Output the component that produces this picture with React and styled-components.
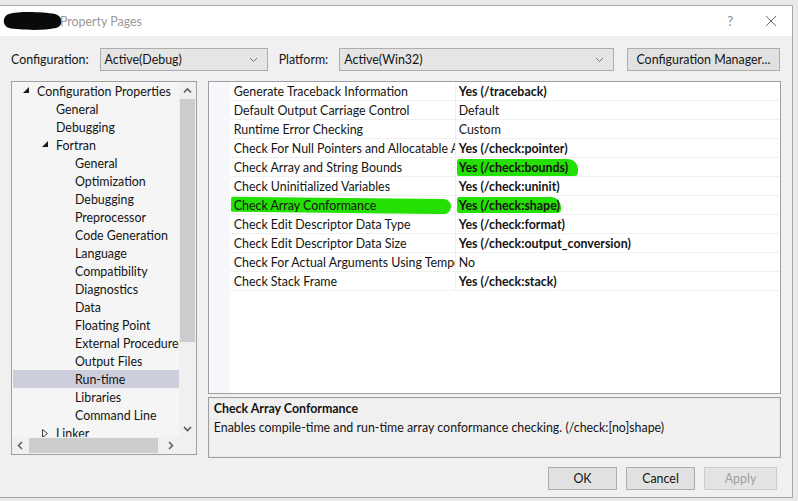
import styled, { createGlobalStyle } from 'styled-components';

const GlobalStyle = createGlobalStyle`
  html, body {
    margin: 0;
    padding: 0;
    background: #e9e9e9;
    overflow: hidden;
  }
  body {
    font-family: Lato, "Noto Sans", sans-serif;
    font-size: 12.4px;
    color: #141414;
  }
`;

const Dialog = styled.div`
  margin-top: 5px;
  width: 792px;
  height: 491px;
  border: 1px solid #a8a8a8;
  border-left: none;
  background: #f0f0f0;
  display: flex;
  flex-direction: column;
`;

const TitleBar = styled.div`
  height: 30px;
  background: #fff;
  display: flex;
  align-items: center;
  padding-left: 3px;
  padding-right: 15px;
  .title {
    color: #9a9a9a;
    margin-left: -3px;
    flex: 1;
    padding-top: 1px;
  }
  .help {
    color: #8a8a8a;
    font-size: 13px;
    margin-right: 32px;
  }
`;

const ConfigRow = styled.div`
  display: flex;
  align-items: center;
  padding: 12px 12px 0 11px;
  height: 23px;
`;

const Label = styled.span`
  width: ${p => p.$w}px;
`;

const Select = styled.div`
  width: ${p => p.$w}px;
  height: 21px;
  border: 1px solid #adadad;
  background: #e5e5e5;
  display: flex;
  align-items: center;
  padding: 0 9px 0 4px;
  margin-right: ${p => p.$mr}px;
  span { flex: 1; }
`;

const Button = styled.div`
  width: ${p => p.$w}px;
  height: 21px;
  border: 1px solid ${p => (p.$disabled ? '#cccccc' : '#adadad')};
  background: ${p => (p.$disabled ? '#e3e3e3' : '#e1e1e1')};
  color: ${p => (p.$disabled ? '#a0a0a0' : '#141414')};
  display: flex;
  align-items: center;
  justify-content: center;
`;

const Main = styled.div`
  display: flex;
  padding: 10px 11px 0 11px;
  gap: 11px;
`;

const TreePanel = styled.div`
  width: 184px;
  height: 372px;
  border: 1px solid #a0a0a0;
  background: #f5f5f5;
  display: grid;
  grid-template-columns: 1fr 17px;
  grid-template-rows: 1fr 17px;
`;

const TreeList = styled.div`
  overflow: hidden;
  padding-left: 1px;
`;

const TreeItem = styled.div`
  height: 18px;
  display: flex;
  align-items: center;
  padding-left: ${p => 24 + p.$level * 19}px;
  white-space: nowrap;
  background: ${p => (p.$selected ? '#cccedb' : 'transparent')};
  position: relative;
  .arrow {
    position: absolute;
    left: ${p => 10 + p.$level * 19}px;
    top: 5px;
  }
`;

const VScroll = styled.div`
  background: #f0f0f0;
  display: flex;
  flex-direction: column;
  align-items: center;
  .thumb {
    width: 15px;
    height: 243px;
    background: #cdcdcd;
  }
  .spacer { flex: 1; }
`;

const ScrollArrow = styled.div`
  width: 17px;
  height: 17px;
  display: flex;
  align-items: center;
  justify-content: center;
`;

const HScroll = styled.div`
  background: #f0f0f0;
  display: flex;
  align-items: center;
  .thumb {
    width: 129px;
    height: 15px;
    background: #cdcdcd;
  }
  .spacer { flex: 1; }
`;

const Corner = styled.div`
  background: #f0f0f0;
`;

const RightCol = styled.div`
  width: 574px;
  display: flex;
  flex-direction: column;
  gap: 3px;
`;

const Grid = styled.div`
  height: 311px;
  border: 1px solid #a0a0a0;
  background: #fff;
  display: flex;
`;

const Margin = styled.div`
  width: 21px;
  background: #f6f8fb;
`;

const Rows = styled.div`
  flex: 1;
  display: flex;
  flex-direction: column;
`;

const Row = styled.div`
  height: 18px;
  border-bottom: 1px solid #f0f0f0;
  display: grid;
  grid-template-columns: 226px 1fr;
`;

const Cell = styled.div`
  position: relative;
  display: flex;
  align-items: center;
  padding-left: ${p => (p.$value ? 3 : 4)}px;
  padding-top: 1px;
  white-space: nowrap;
  overflow: hidden;
  font-weight: ${p => (p.$bold ? 700 : 400)};
  border-right: ${p => (p.$value ? 'none' : '1px solid #f0f0f0')};
  span { position: relative; }
`;

const Marker = styled.div`
  position: absolute;
  left: ${p => p.$l}px;
  width: ${p => p.$w}px;
  top: ${p => p.$t}px;
  height: ${p => p.$h}px;
  background: #24e004;
  border-radius: ${p => p.$r || '2px 10px 4px 2px'};
  transform: rotate(${p => p.$rot || 0}deg);
`;

const Description = styled.div`
  box-sizing: border-box;
  height: 61px;
  border: 1px solid #a0a0a0;
  box-shadow: inset 0 0 0 1px #e8e8e8;
  background: #f0f0f0;
  padding: 3px 5px;
  display: flex;
  flex-direction: column;
  gap: 4px;
  .head { font-weight: 700; }
`;

const Footer = styled.div`
  display: flex;
  justify-content: flex-end;
  gap: 9px;
  padding: 9px 15px 0 0;
`;

const Chevron = ({ dir = 'down', color = '#606060', size = 9, thin }) => {
  const paths = {
    down: 'M1 3 L4.5 6.5 L8 3',
    up: 'M1 6.5 L4.5 3 L8 6.5',
    left: 'M6 1 L2.5 4.5 L6 8',
    right: 'M3 1 L6.5 4.5 L3 8',
  };
  return (
    <svg width={size} height={size} viewBox="0 0 9 9">
      <path d={paths[dir]} fill="none" stroke={color} strokeWidth={thin ? 1 : 1.6} />
    </svg>
  );
};

const ExpandedArrow = () => (
  <svg width="7" height="7" viewBox="0 0 7 7" className="arrow">
    <polygon points="6,0 6,6 0,6" fill="#1a1a1a" />
  </svg>
);

const CollapsedArrow = () => (
  <svg width="7" height="9" viewBox="0 0 7 9" className="arrow">
    <polygon points="0.5,0.5 5.5,4.5 0.5,8.5" fill="none" stroke="#3a3a3a" strokeWidth="1" />
  </svg>
);

const treeItems = [
  { label: 'Configuration Properties', level: 0, arrow: 'open' },
  { label: 'General', level: 1 },
  { label: 'Debugging', level: 1 },
  { label: 'Fortran', level: 1, arrow: 'open' },
  { label: 'General', level: 2 },
  { label: 'Optimization', level: 2 },
  { label: 'Debugging', level: 2 },
  { label: 'Preprocessor', level: 2 },
  { label: 'Code Generation', level: 2 },
  { label: 'Language', level: 2 },
  { label: 'Compatibility', level: 2 },
  { label: 'Diagnostics', level: 2 },
  { label: 'Data', level: 2 },
  { label: 'Floating Point', level: 2 },
  { label: 'External Procedures', level: 2 },
  { label: 'Output Files', level: 2 },
  { label: 'Run-time', level: 2, selected: true },
  { label: 'Libraries', level: 2 },
  { label: 'Command Line', level: 2 },
  { label: 'Linker', level: 1, arrow: 'closed' },
];

const props = [
  { name: 'Generate Traceback Information', value: 'Yes (/traceback)', bold: true },
  { name: 'Default Output Carriage Control', value: 'Default' },
  { name: 'Runtime Error Checking', value: 'Custom' },
  { name: 'Check For Null Pointers and Allocatable Array References', value: 'Yes (/check:pointer)', bold: true },
  { name: 'Check Array and String Bounds', value: 'Yes (/check:bounds)', bold: true, valueMark: { l: 1, w: 121, t: 1, h: 17 } },
  { name: 'Check Uninitialized Variables', value: 'Yes (/check:uninit)', bold: true },
  {
    name: 'Check Array Conformance', value: 'Yes (/check:shape)', bold: true,
    nameMark: { l: 1, w: 220, t: 2, h: 15, r: '2px 8px 8px 2px', rot: 0.6 },
    valueMark: { l: 1, w: 104, t: 1, h: 16 },
  },
  { name: 'Check Edit Descriptor Data Type', value: 'Yes (/check:format)', bold: true },
  { name: 'Check Edit Descriptor Data Size', value: 'Yes (/check:output_conversion)', bold: true },
  { name: 'Check For Actual Arguments Using Temporary Storage', value: 'No' },
  { name: 'Check Stack Frame', value: 'Yes (/check:stack)', bold: true },
];

const mark = m => m && <Marker $l={m.l} $w={m.w} $t={m.t} $h={m.h} $r={m.r} $rot={m.rot} />;

export default function App() {
  return (
    <>
      <GlobalStyle />
      <Dialog>
        <TitleBar>
          <svg width="60" height="20" viewBox="0 0 60 20">
            <path d="M6 3 C16 0 40 1 52 3 C60 5 61 15 53 17 C40 20 16 19 6 17 C-1 15 -1 5 6 3 Z" fill="#0a0a0a" />
          </svg>
          <span className="title">Property Pages</span>
          <span className="help">?</span>
          <svg width="12" height="12" viewBox="0 0 12 12">
            <path d="M1 1 L11 11 M11 1 L1 11" stroke="#6a6a6a" strokeWidth="1" />
          </svg>
        </TitleBar>

        <ConfigRow>
          <Label $w={89}>Configuration:</Label>
          <Select $w={154} $mr={11}>
            <span>Active(Debug)</span>
            <Chevron dir="down" color="#707070" thin />
          </Select>
          <Label $w={61}>Platform:</Label>
          <Select $w={261} $mr={13}>
            <span>Active(Win32)</span>
            <Chevron dir="down" color="#707070" thin />
          </Select>
          <Button $w={152}>Configuration Manager...</Button>
        </ConfigRow>

        <Main>
          <TreePanel>
            <TreeList>
              {treeItems.map((it, i) => (
                <TreeItem key={i} $level={it.level} $selected={it.selected}>
                  {it.arrow === 'open' && <ExpandedArrow />}
                  {it.arrow === 'closed' && <CollapsedArrow />}
                  {it.label}
                </TreeItem>
              ))}
            </TreeList>
            <VScroll>
              <ScrollArrow><Chevron dir="up" /></ScrollArrow>
              <div className="thumb" />
              <div className="spacer" />
              <ScrollArrow><Chevron dir="down" color="#555" /></ScrollArrow>
            </VScroll>
            <HScroll>
              <ScrollArrow><Chevron dir="left" /></ScrollArrow>
              <div className="thumb" />
              <div className="spacer" />
              <ScrollArrow><Chevron dir="right" /></ScrollArrow>
            </HScroll>
            <Corner />
          </TreePanel>

          <RightCol>
            <Grid>
              <Margin />
              <Rows>
                {props.map((p, i) => (
                  <Row key={i}>
                    <Cell>
                      {mark(p.nameMark)}
                      <span>{p.name}</span>
                    </Cell>
                    <Cell $value $bold={p.bold}>
                      {mark(p.valueMark)}
                      <span>{p.value}</span>
                    </Cell>
                  </Row>
                ))}
              </Rows>
            </Grid>
            <Description>
              <span className="head">Check Array Conformance</span>
              <span>Enables compile-time and run-time array conformance checking. (/check:[no]shape)</span>
            </Description>
          </RightCol>
        </Main>

        <Footer>
          <Button $w={67}>OK</Button>
          <Button $w={67}>Cancel</Button>
          <Button $w={71} $disabled>Apply</Button>
        </Footer>
      </Dialog>
    </>
  );
}
